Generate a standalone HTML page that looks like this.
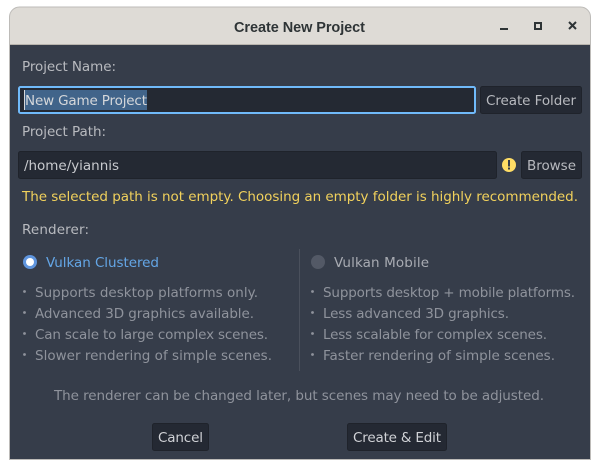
<!DOCTYPE html>
<html><head><meta charset="utf-8">
<style>
html,body{margin:0;padding:0;background:#fff;width:600px;height:469px;overflow:hidden}
svg{display:block}
text{font-family:"DejaVu Sans",sans-serif;font-size:13.5px;white-space:pre}
</style></head>
<body>
<svg width="600" height="469" viewBox="0 0 600 469" xmlns="http://www.w3.org/2000/svg">
<rect width="600" height="469" fill="#fff"/>
<path d="M9.5 459.5V17a10 10 0 0 1 10-10H580.5a10 10 0 0 1 10 10V459.5Z" fill="#dedbd6" stroke="#bdbbb8"/>
<rect x="10" y="45" width="580" height="414" fill="#363d4a"/>
<rect x="10" y="44" width="580" height="1" fill="#b9b5ae"/>
<text x="234" y="32" textLength="131" font-weight="bold" fill="#2e3436" style="font-family:'Liberation Sans',sans-serif;font-size:14.5px">Create New Project</text>
<rect x="500" y="28" width="8" height="2" fill="#2e3436"/>
<rect x="535" y="23" width="6" height="6" fill="none" stroke="#2e3436" stroke-width="2"/>
<path d="M569 22L576 29M576 22L569 29" stroke="#2e3436" stroke-width="2"/>

<text x="22" y="71" textLength="94" fill="#b8babf">Project Name:</text>
<rect x="19" y="87" width="456" height="26" rx="1.5" fill="#242933" stroke="#70bafa" stroke-width="2"/>
<rect x="25" y="90" width="122" height="20" fill="#41648a"/>
<rect x="24" y="90" width="1" height="20" fill="#d5d7da"/>
<text x="25" y="105" textLength="122" fill="#d5d7da">New Game Project</text>
<rect x="480.5" y="86.5" width="101" height="27" rx="2" fill="#242933" stroke="#1f232b"/>
<text x="486" y="105" textLength="90" fill="#b8babf">Create Folder</text>

<text x="22" y="136" textLength="84" fill="#b8babf">Project Path:</text>
<rect x="18.5" y="151.5" width="478" height="27" rx="2" fill="#242933" stroke="#1f232b"/>
<text x="24" y="170" textLength="95" fill="#c8cace">/home/yiannis</text>
<circle cx="509" cy="165" r="7" fill="#ffdd65"/>
<rect x="508" y="160" width="2" height="6.5" fill="#363d4a"/>
<rect x="508" y="167.5" width="2" height="2" fill="#363d4a"/>
<rect x="521.5" y="151.5" width="60" height="27" rx="2" fill="#242933" stroke="#1f232b"/>
<text x="527" y="170" textLength="49" fill="#b8babf">Browse</text>
<text x="22" y="201" textLength="556" fill="#f1d15c">The selected path is not empty. Choosing an empty folder is highly recommended.</text>

<text x="22" y="234" textLength="67" fill="#b8babf">Renderer:</text>
<circle cx="30" cy="262" r="7" fill="#5f95de"/>
<circle cx="30" cy="262" r="4" fill="#fff"/>
<text x="46" y="267" textLength="113" fill="#64a6e6">Vulkan Clustered</text>
<rect x="299" y="249" width="1" height="122" fill="#4a505c"/>
<circle cx="318" cy="262" r="7" fill="#535966"/>
<text x="334" y="267" textLength="95" fill="#a8abb2">Vulkan Mobile</text>

<g fill="#8f939c">
<circle cx="24.5" cy="291.5" r="1.4"/><circle cx="24.5" cy="312.5" r="1.4"/><circle cx="24.5" cy="333.5" r="1.4"/><circle cx="24.5" cy="354.5" r="1.4"/>
<circle cx="312.5" cy="291.5" r="1.4"/><circle cx="312.5" cy="312.5" r="1.4"/><circle cx="312.5" cy="333.5" r="1.4"/><circle cx="312.5" cy="354.5" r="1.4"/>
<text x="35" y="297" textLength="223">Supports desktop platforms only.</text>
<text x="35" y="318" textLength="219">Advanced 3D graphics available.</text>
<text x="35" y="339" textLength="233">Can scale to large complex scenes.</text>
<text x="35" y="360" textLength="237">Slower rendering of simple scenes.</text>
<text x="323" y="297" textLength="252">Supports desktop + mobile platforms.</text>
<text x="323" y="318" textLength="186">Less advanced 3D graphics.</text>
<text x="323" y="339" textLength="224">Less scalable for complex scenes.</text>
<text x="323" y="360" textLength="232">Faster rendering of simple scenes.</text>
<text x="54" y="400" textLength="490">The renderer can be changed later, but scenes may need to be adjusted.</text>
</g>

<rect x="152.5" y="423.5" width="56" height="27" rx="2" fill="#242933" stroke="#1f232b"/>
<text x="158" y="442" textLength="45" fill="#d0d2d6">Cancel</text>
<rect x="347.5" y="423.5" width="99" height="27" rx="2" fill="#242933" stroke="#1f232b"/>
<text x="353" y="442" textLength="88" fill="#d0d2d6">Create &amp; Edit</text>
</svg>
</body></html>
